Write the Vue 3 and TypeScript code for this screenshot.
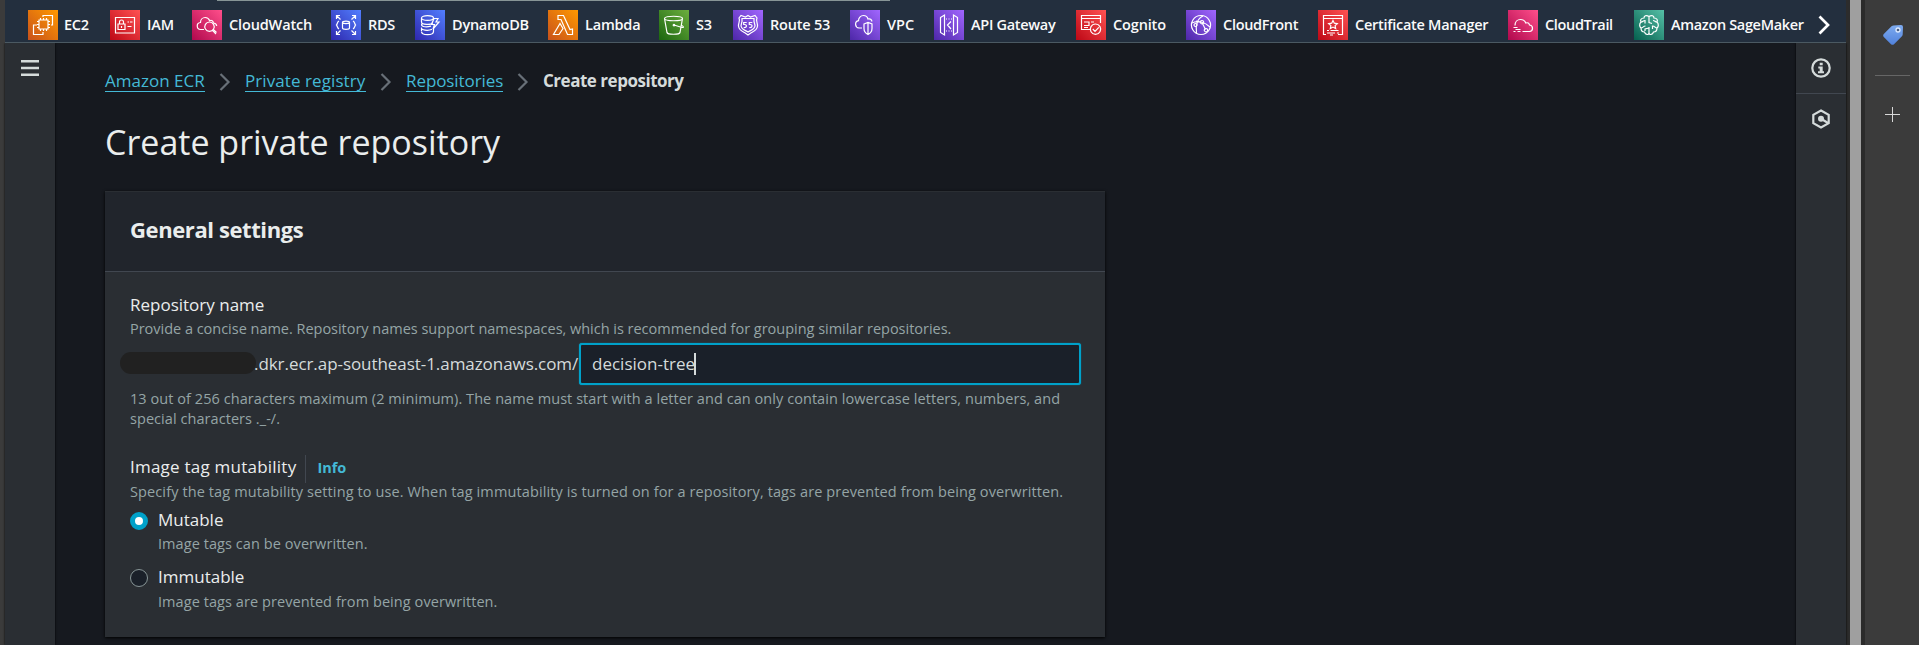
<script setup lang="ts">
interface Service {
  name: string
  width: number
  tone: string
  spacing: number
  icon: string[]
}

const services: Service[] = [
  { name: 'EC2', width: 82, tone: 'orange', spacing: -0.3, icon: ['M11 10h9v9h-9z', 'M12.5 8v2M15.5 8v2M18.5 8v2M12.5 19v2M15.5 19v2M18.5 19v2M9 11.5h2M9 14.5h2M9 17.5h2M20 11.5h2M20 14.5h2M20 17.5h2', 'M15 7V5.500h9.500V15H23M9 15H5.500v9.500h9.500V22'] },
  { name: 'IAM', width: 82, tone: 'red', spacing: -0.1, icon: ['M5.500 7.500h19v15.500h-19z', 'M8 14h7v5.500H8zM9.500 14v-2a2 2 0 0 1 4 0v2M11.500 16v2', 'M17.500 12h1.500M20 12h2.500M17.500 16.500h4'] },
  { name: 'CloudWatch', width: 139, tone: 'pink', spacing: -0.15, icon: ['M12 19.500H9a3.500 3.500 0 0 1-.5-7c0-3 2.200-5 4.700-5 2.300 0 3.800 1.300 4.500 3.200 2-.8 3.500.300 3.700 2.300 2 .2 3.100 1.400 3.300 3', 'M17.500 12a4.700 4.700 0 1 1-.01 0M20.500 20.300l3.500 3.700M21.300 19.300l3.200 3.200'] },
  { name: 'RDS', width: 84, tone: 'blue', spacing: -0.3, icon: ['M5.500 9V5.500H9M5.500 5.500L9.500 9.500M21 5.500h3.500V9M24.500 5.500l-4 4M5.500 21v3.500H9M5.500 24.500l4-4M21 24.500h3.500V21M24.500 24.500l-4-4', 'M11.500 12.300v5.700c0 1.800 7 1.800 7 0v-5.700M11.500 12.300c0-1.700 7-1.700 7 0s-7 1.700-7 0', 'M8 11c-2 1-1.500 3-2.500 4 1 1 .5 3 2.500 4M22 11c2 1 1.500 3 2.500 4-1 1-.5 3-2.500 4'] },
  { name: 'DynamoDB', width: 133, tone: 'blue', spacing: -0.25, icon: ['M6.500 8c0-3.200 12-3.200 12 0s-12 3.200-12 0v4c0 3 10 3 11 1M18.500 8v1M7 13.500c-2 3 3 4 9 2.700M6.500 17.500c-1 3 7 3.500 10.500 1.800M6.500 21.500c0 4.200 12 4.200 12 0v-3M6.500 21v-3', 'M19 8.500l-2.500 6h3L18 19l6-7h-3l2-3.500z'] },
  { name: 'Lambda', width: 111, tone: 'orange', spacing: -0.2, icon: ['M10 5.500h5.500l6.500 14 2.500-.5v5.500h-5L13 9.500h-3z', 'M12 13.500L5.500 24.500H11l4-6z'] },
  { name: 'S3', width: 74, tone: 'green', spacing: -0.2, icon: ['M5.500 8.500c0-3 18-3 18 0s-18 3-18 0L8 22.500c.5 2.300 12.500 2.300 13 0l2.500-14', 'M15 15l8 2.500c2 .2 2-1-1-2.500M15 14.300a.8.8 0 1 1-.01 0'] },
  { name: 'Route 53', width: 117, tone: 'violet', spacing: -0.2, icon: ['M15 5.500l2.500 1.500L22 5.500l2 2.500c-1.500 3 .8 5 .5 8-.4 4-3 5-6 6.500L15 25l-3.500-2.500c-3-1.500-5.600-2.500-6-6.500-.3-3 2-5 .5-8l2-2.500L12.500 7z', 'M9 8.500h12v3l1 4c0 4-4 4.500-7 6.500-3-2-7-2.500-7-6.500l1-4zM13.700 12.500h-3v2h1c2.500.2 2.500 3.300-1 3M19.300 12.500h-3v2h1c2.500.2 2.500 3.300-1 3'] },
  { name: 'VPC', width: 84, tone: 'violet', spacing: 0, icon: ['M12 18H9a3.700 3.700 0 0 1-.5-7.300C8.500 8 10.500 5.500 13.500 5.500c2.200 0 4 1.500 4.500 3.500 2-.5 3.500.5 4 2.500', 'M14 14l4-1.500 4 1.500v4.500c0 3-2 5-4 6-2-1-4-3-4-6zM18 12.500v12'] },
  { name: 'API Gateway', width: 142, tone: 'violet', spacing: -0.3, icon: ['M6.500 7.500L10.500 5v20l-4-2.500zM23.500 7.500L19.500 5v20l4-2.500z', 'M12 9h1M14.500 9h1M17 9h1M12 21h1M14.500 21h1M17 21h1M17 11.500L13.500 15l3.500 4'] },
  { name: 'Cognito', width: 110, tone: 'red', spacing: -0.15, icon: ['M14 19.500H5.500v-14h19V13M5.500 8.500h19M8 12h5v3.500H8M15 12h3M8 17.500h4', 'M19.500 14a5.200 5.200 0 1 1-.01 0M16.800 19l2.200 2.300 3.800-4'] },
  { name: 'CloudFront', width: 132, tone: 'violet', spacing: -0.3, icon: ['M15 5.500a9.500 9.500 0 1 1-.01 0', 'M17 6c-5 2-8 9-6.500 17M6 13c5-3 13-1 18 4M10 11l5 1M16 12.500l3.500 7', 'M16 10.500a1.700 1.700 0 1 1-.01 0M9.500 13.500a1.500 1.500 0 1 1-.01 0M20 18.500a1.700 1.700 0 1 1-.01 0'] },
  { name: 'Certificate Manager', width: 190, tone: 'red', spacing: -0.27, icon: ['M20 24.500h4.500v-19h-19v19H8M5.500 8.500h19', 'M15 10.500l1.300 2.700 3 .4-2.200 2 .6 3-2.700-1.500-2.700 1.500.6-3-2.200-2 3-.4z', 'M9 20.500h2M12.500 20.500h8M9 23h8M12 25h3M19 23h2'] },
  { name: 'CloudTrail', width: 126, tone: 'pink', spacing: -0.35, icon: ['M7 15.500c0-3.500 2.300-6 5.500-6 2.300 0 4.300 1.200 5.300 3.500 2-.8 3.300.3 3.700 2 4 .3 4 6.500 0 6.500H14.500', 'M5.500 17.500h4M5.500 21.500h2M9.500 21.500h3M7.500 19.500h5'] },
  { name: 'Amazon SageMaker', width: 171, tone: 'teal', spacing: -0.34, icon: ['M15 6.500c-3-2-5-.5-5 1.500-3 0-4 2-3 4-2 2-1.500 5 0 6 0 3 1.500 4 3.500 4 1 3 4 3 4.500 1.500M15 6.500c3-2 5-.5 5 1.500 3 0 4 2 3 4 2 2 1.500 5 0 6 0 3-1.500 4-3.500 4-1 3-4 3-4.500 1.500', 'M15 6.500v6l3 1M15 17v7M7 12c2 0 2-1.500 4-1.500v3M7 18c2 0 2-2 4.500-2M11 21v-2l4-1M23 12c-2 0-2-1.500-4-1.500M23 18c-2 0-2-2-4.500-2v3'] },
]

const crumbs = [
  { label: 'Amazon ECR', cls: 'c1' },
  { label: 'Private registry', cls: 'c2' },
  { label: 'Repositories', cls: 'c3' },
]
</script>

<template>
  <div class="window">
    <div class="edge"></div>
    <div class="console">
      <header class="favorites">
        <div class="load-bar"></div>
        <a v-for="s in services" :key="s.name" class="service" :style="{ width: s.width + 'px' }">
          <svg class="service-icon" :class="s.tone" viewBox="0 0 30 30"><path v-for="d in s.icon" :key="d" :d="d" /></svg>
          <span :style="{ letterSpacing: s.spacing + 'px' }">{{ s.name }}</span>
        </a>
        <svg class="more" viewBox="0 0 12 20"><path d="M1.500 1.500L10 10l-8.500 8.500" /></svg>
      </header>
      <div class="body">
        <aside class="side left">
          <svg class="menu" viewBox="0 0 18 16"><path d="M0 1.250h18M0 8h18M0 14.750h18" /></svg>
        </aside>
        <main>
          <nav class="crumbs">
            <template v-for="c in crumbs" :key="c.label">
              <a :class="c.cls">{{ c.label }}</a>
              <svg viewBox="0 0 12 18"><path d="M1.500 1L9.500 9l-8 8" /></svg>
            </template>
            <b>Create repository</b>
          </nav>
          <h1>Create private repository</h1>
          <section class="card">
            <h2>General settings</h2>
            <div class="form">
              <div class="label">Repository name</div>
              <div class="hint intro">Provide a concise name. Repository names support namespaces, which is recommended for grouping similar repositories.</div>
              <div class="uri">
                <span class="redacted"></span>
                <span class="host">.dkr.ecr.ap-southeast-1.amazonaws.com/</span>
                <div class="field"><span>decision-tree</span><i></i></div>
              </div>
              <div class="hint limits">13 out of 256 characters maximum (2 minimum). The name must start with a letter and can only contain lowercase letters, numbers, and<br>special characters ._-/.</div>
              <div class="label mutability"><span>Image tag mutability</span><a>Info</a></div>
              <div class="hint setting">Specify the tag mutability setting to use. When tag immutability is turned on for a repository, tags are prevented from being overwritten.</div>
              <div class="option">
                <span class="radio on"></span>
                <div><div class="label">Mutable</div><div class="hint">Image tags can be overwritten.</div></div>
              </div>
              <div class="option second">
                <span class="radio"></span>
                <div><div class="label">Immutable</div><div class="hint">Image tags are prevented from being overwritten.</div></div>
              </div>
            </div>
          </section>
        </main>
        <aside class="side right">
          <div class="tool">
            <svg viewBox="0 0 20 20"><circle cx="10" cy="10" r="8.700" /><path class="fill" d="M8.700 4.800h3v2.400h-3zM7.300 8.500h4.400v4.800H13v2H7v-2h1.700v-2.800H7.300z" /></svg>
          </div>
          <div class="tool last">
            <svg viewBox="0 0 20 20"><path d="M10 1.500l7.700 4.300v8.400L10 18.500l-7.700-4.300V5.800z" /><circle class="fill" cx="10" cy="9.800" r="3" /><path d="M10.500 10l6.500 4" /></svg>
          </div>
        </aside>
      </div>
    </div>
    <div class="gutter"></div>
    <div class="scroll"></div>
    <div class="browser-bar">
      <svg class="tag" viewBox="0 0 20 20">
        <defs><linearGradient id="tagFill" x1="0" y1="0" x2="0" y2="1"><stop offset="0" stop-color="#7eabef" /><stop offset="1" stop-color="#5182dc" /></linearGradient></defs>
        <path fill="url(#tagFill)" d="M10.500.5 18 0q2 0 2 2l-.3 7.500q0 1-1 2L11 19.200q-1.500 1.200-3 0L.8 12q-1.300-1.500 0-3l7.700-7.700q1-.8 2-.8z" />
        <circle cx="15" cy="5" r="2" fill="#4b5f83" stroke="#dceaff" stroke-width="1.300" />
      </svg>
      <div class="rule"></div>
      <svg class="plus" viewBox="0 0 15 15"><path d="M7.500 0v15M0 7.500h15" /></svg>
    </div>
  </div>
</template>

<style>
html, body { margin: 0; overflow: hidden; background: #16191f; }
</style>

<style scoped>
* { box-sizing: border-box; }
.window { width: 1919px; height: 645px; display: flex; overflow: hidden; background: #16191f; color: #d5dbdb; font-family: "Open Sans", "Noto Sans", sans-serif; font-stretch: 90%; font-size: 15px; white-space: nowrap; }
.edge { width: 5px; flex: none; background: #3b3b3b; }
.console { width: 1841px; flex: none; display: flex; flex-direction: column; }
.favorites { position: relative; height: 43px; display: flex; flex: none; padding: 10px 0 0 23px; background: #232f3e; border-bottom: 1px solid #4b5962; }
.load-bar { position: absolute; left: 212px; top: 0; width: 673px; height: 1px; background: #879596; }
.service { display: flex; flex: none; height: 30px; gap: 7px; align-items: flex-start; color: #fafafa; font-weight: 600; line-height: 29px; font-size: 14.500px; }
.service:nth-of-type(1) { gap: 6px; }
.service-icon { width: 30px; height: 30px; flex: none; fill: none; stroke: #fff; stroke-width: 1.200; }
.orange { background: linear-gradient(45deg, #c8511b, #ff9900); }
.red { background: linear-gradient(45deg, #bd0816, #ff5252); }
.pink { background: linear-gradient(45deg, #b0084d, #ff4f8b); }
.blue { background: linear-gradient(45deg, #2e27ad, #527fff); }
.green { background: linear-gradient(45deg, #1b660f, #6cae3e); }
.violet { background: linear-gradient(45deg, #4d27a8, #a166ff); }
.teal { background: linear-gradient(45deg, #055f4e, #56c0a7); }
.more { position: absolute; left: 1813px; top: 15px; width: 12px; height: 20px; fill: none; stroke: #fff; stroke-width: 2.700; }
.body { flex: 1; display: flex; }
.side { width: 50px; flex: none; background: #2a2e33; box-shadow: 0 0 2px #000; clip-path: inset(0 -3px); }
.menu { display: block; width: 18px; height: 16px; margin: 17px 0 0 16px; stroke: #d5dbdb; stroke-width: 2.500; }
main { width: 1741px; padding-left: 50px; }
.crumbs { display: flex; height: 22px; margin-top: 27px; font-size: 17px; align-items: center; }
.crumbs a { color: #44b9d6; height: 22px; line-height: 21px; border-bottom: 1px solid #44b9d6; flex: none; }
.crumbs svg { width: 12px; height: 18px; margin: 2px 14px 0; fill: none; stroke: #687078; stroke-width: 2.200; flex: none; }
.crumbs b { line-height: 21px; letter-spacing: -0.480px; height: 22px; }
.c1 { width: 100px; letter-spacing: 0.020px; }
.c2 { width: 121px; letter-spacing: 0.080px; }
.c3 { width: 97px; letter-spacing: -0.080px; }
h1 { margin: 28px 0 0; height: 44px; line-height: 44px; font-size: 34px; font-weight: 400; color: #eaeded; }
.card { width: 1000px; height: 446px; margin-top: 27px; background: #2a2e33; box-shadow: 0 1px 3px #000; }
h2 { margin: 0; height: 81px; padding: 0 25px; line-height: 74px; font-size: 22px; font-weight: 700; letter-spacing: -0.400px; color: #eaeded; background: #21252c; border-top: 1px solid #2a2e33; border-bottom: 1px solid #414750; }
.form { padding: 20px 24px 0 25px; }
.label { height: 27px; line-height: 26px; font-size: 17px; color: #eaeded; }
.hint { height: 20px; line-height: 20px; font-size: 14.500px; letter-spacing: 0.070px; color: #95a5a6; }
.intro { letter-spacing: -0.020px; }
.uri { display: flex; height: 42px; margin-top: 4px; line-height: 42px; font-size: 17px; }
.redacted { width: 136px; height: 22px; flex: none; margin: 9px -2px 0 -10px; border-radius: 11px; background: #212121; }
.host { width: 325px; flex: none; letter-spacing: -0.060px; }
.field { width: 502px; height: 42px; flex: none; display: flex; align-items: center; padding-left: 11px; background: #1a2029; border: 2px solid #00a1c9; border-radius: 3px; box-shadow: 0 0 1px #00a1c9; }
.field i { width: 2px; height: 22px; margin-left: -1px; background: #d5dbdb; }
.limits { height: 40px; margin-top: 4px; letter-spacing: 0.058px; }
.mutability { display: flex; margin-top: 25px; height: 28px; }
.mutability span { letter-spacing: 0.230px; }
.mutability a { height: 28px; margin: 1px 0 0 9px; padding-left: 11px; line-height: 25px; font-size: 14.500px; font-weight: 700; color: #44b9d6; border-left: 1px solid #414750; }
.setting { letter-spacing: 0.115px; }
.option { display: flex; margin-top: 5px; gap: 10px; }
.option.second { margin-top: 10px; }
.option.second .label { height: 28px; }
.radio { width: 18px; height: 18px; margin-top: 5px; border-radius: 50%; background: #1a2029; border: 1px solid #879596; }
.radio.on { border: 5px solid #00a1c9; background: #fff; }
.tool { height: 51px; padding: 15px; border-bottom: 1px solid #414750; }
.tool.last { border: 0; }
.tool svg { display: block; width: 20px; height: 20px; fill: none; stroke: #d5dbdb; stroke-width: 2.200; }
.tool .fill { fill: #d5dbdb; stroke: none; }
.gutter { width: 4px; flex: none; background: #2c2c2c; }
.scroll { width: 11px; flex: none; background: #9f9f9f; }
.browser-bar { flex: 1; display: flex; flex-direction: column; align-items: center; border-left: 4px solid #2b2b2b; background: #3b3b3b; }
.tag { width: 20px; height: 20px; margin: 25px 0 0 2px; }
.rule { width: 35px; height: 1px; margin-top: 30px; background: #666; }
.plus { width: 15px; height: 15px; margin-top: 31px; fill: none; stroke: #d8d8d8; stroke-width: 1; }
</style>
